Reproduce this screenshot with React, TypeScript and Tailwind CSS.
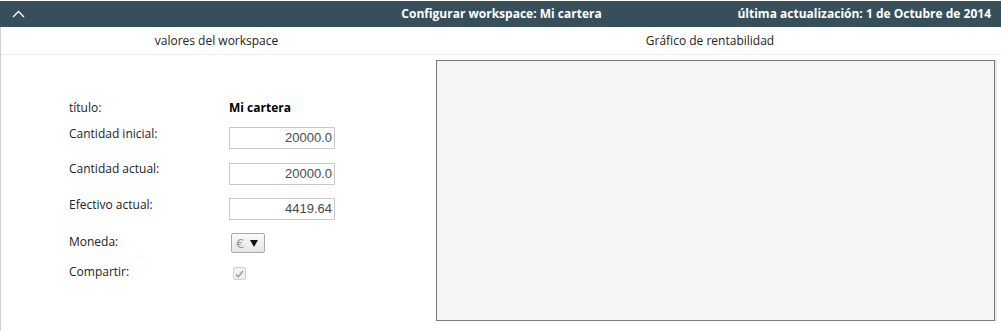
import React from "react";

const font = { fontFamily: '"Open Sans", "DejaVu Sans", sans-serif' };

function NumInput({ value, mt }: { value: string; mt: string }) {
  return (
    <div
      className={`${mt} w-[106px] h-[22px] border border-[#c8c8c8] bg-white flex items-center justify-end pr-[2px] text-[13px] text-[#4a4a4a] font-['Liberation_Sans',Arial,sans-serif]`}
    >
      {value}
    </div>
  );
}

export default function App() {
  return (
    <div className="w-[1001px] h-[331px] bg-white text-[12px] text-[#222] overflow-hidden" style={font}>
      <div className="mt-px h-[26px] bg-[#374f5a] flex items-center text-white font-bold text-[12px] relative">
        <svg className="ml-[12px]" width="13" height="8" viewBox="0 0 13 8">
          <polyline points="1,7 6.5,1.5 12,7" fill="none" stroke="#ffffff" strokeWidth="1.4" />
        </svg>
        <div className="absolute left-0 right-0 text-center pl-[2px]">Configurar workspace: Mi cartera</div>
        <div className="ml-auto mr-[10px] relative">última actualización: 1 de Octubre de 2014</div>
      </div>
      <div className="border-l border-[#cfcfcf] h-[304px]">
        <div className="h-[28px] border-b border-[#ebebeb] flex items-center text-[12px] text-[#222]">
          <div className="w-[431px] text-center">valores del workspace</div>
          <div className="w-[556px] text-center">Gráfico de rentabilidad</div>
        </div>
        <div className="flex">
          <div className="w-[435px] pt-[45px] pl-[68px]">
            <div className="flex h-[26px]">
              <div className="w-[160px] leading-[16px]">título:</div>
              <div className="leading-[16px] font-bold text-black">Mi cartera</div>
            </div>
            <div className="flex h-[35px]">
              <div className="w-[160px] leading-[16px]">Cantidad inicial:</div>
              <NumInput value="20000.0" mt="mt-[1px]" />
            </div>
            <div className="flex h-[36px]">
              <div className="w-[160px] leading-[16px]">Cantidad actual:</div>
              <NumInput value="20000.0" mt="mt-[2px]" />
            </div>
            <div className="flex h-[36px]">
              <div className="w-[160px] leading-[16px]">Efectivo actual:</div>
              <NumInput value="4419.64" mt="mt-[1px]" />
            </div>
            <div className="flex h-[31px]">
              <div className="w-[162px] leading-[16px] mt-[1px]">Moneda:</div>
              <div className="w-[34px] h-[20px] border border-[#a9a9a9] rounded-[2px] bg-gradient-to-b from-[#fafafa] to-[#e6e6e6] flex items-center pl-[4px] gap-[6px]">
                <span className="text-[13px] text-[#999] leading-none font-['DejaVu_Sans',sans-serif]">€</span>
                <svg width="8" height="7" viewBox="0 0 8 7">
                  <polygon points="0,0 8,0 4,7" fill="#111" />
                </svg>
              </div>
            </div>
            <div className="flex">
              <div className="w-[164px] leading-[16px]">Compartir:</div>
              <div className="mt-[3px] w-[13px] h-[13px] border border-[#cfcfcf] rounded-[2px] bg-[#f2f2f2] flex items-center justify-center">
                <svg width="9" height="8" viewBox="0 0 9 8">
                  <polyline points="1,4.5 3.3,6.8 8,1.2" fill="none" stroke="#a8a8a8" strokeWidth="1.8" />
                </svg>
              </div>
            </div>
          </div>
          <div className="mt-[5px] w-[559px] h-[261px] border border-[#787878] bg-[#f5f5f5]" />
          <div className="mt-[5px] w-[2px] h-[261px] bg-[#e9e9e9]" />
        </div>
      </div>
    </div>
  );
}
